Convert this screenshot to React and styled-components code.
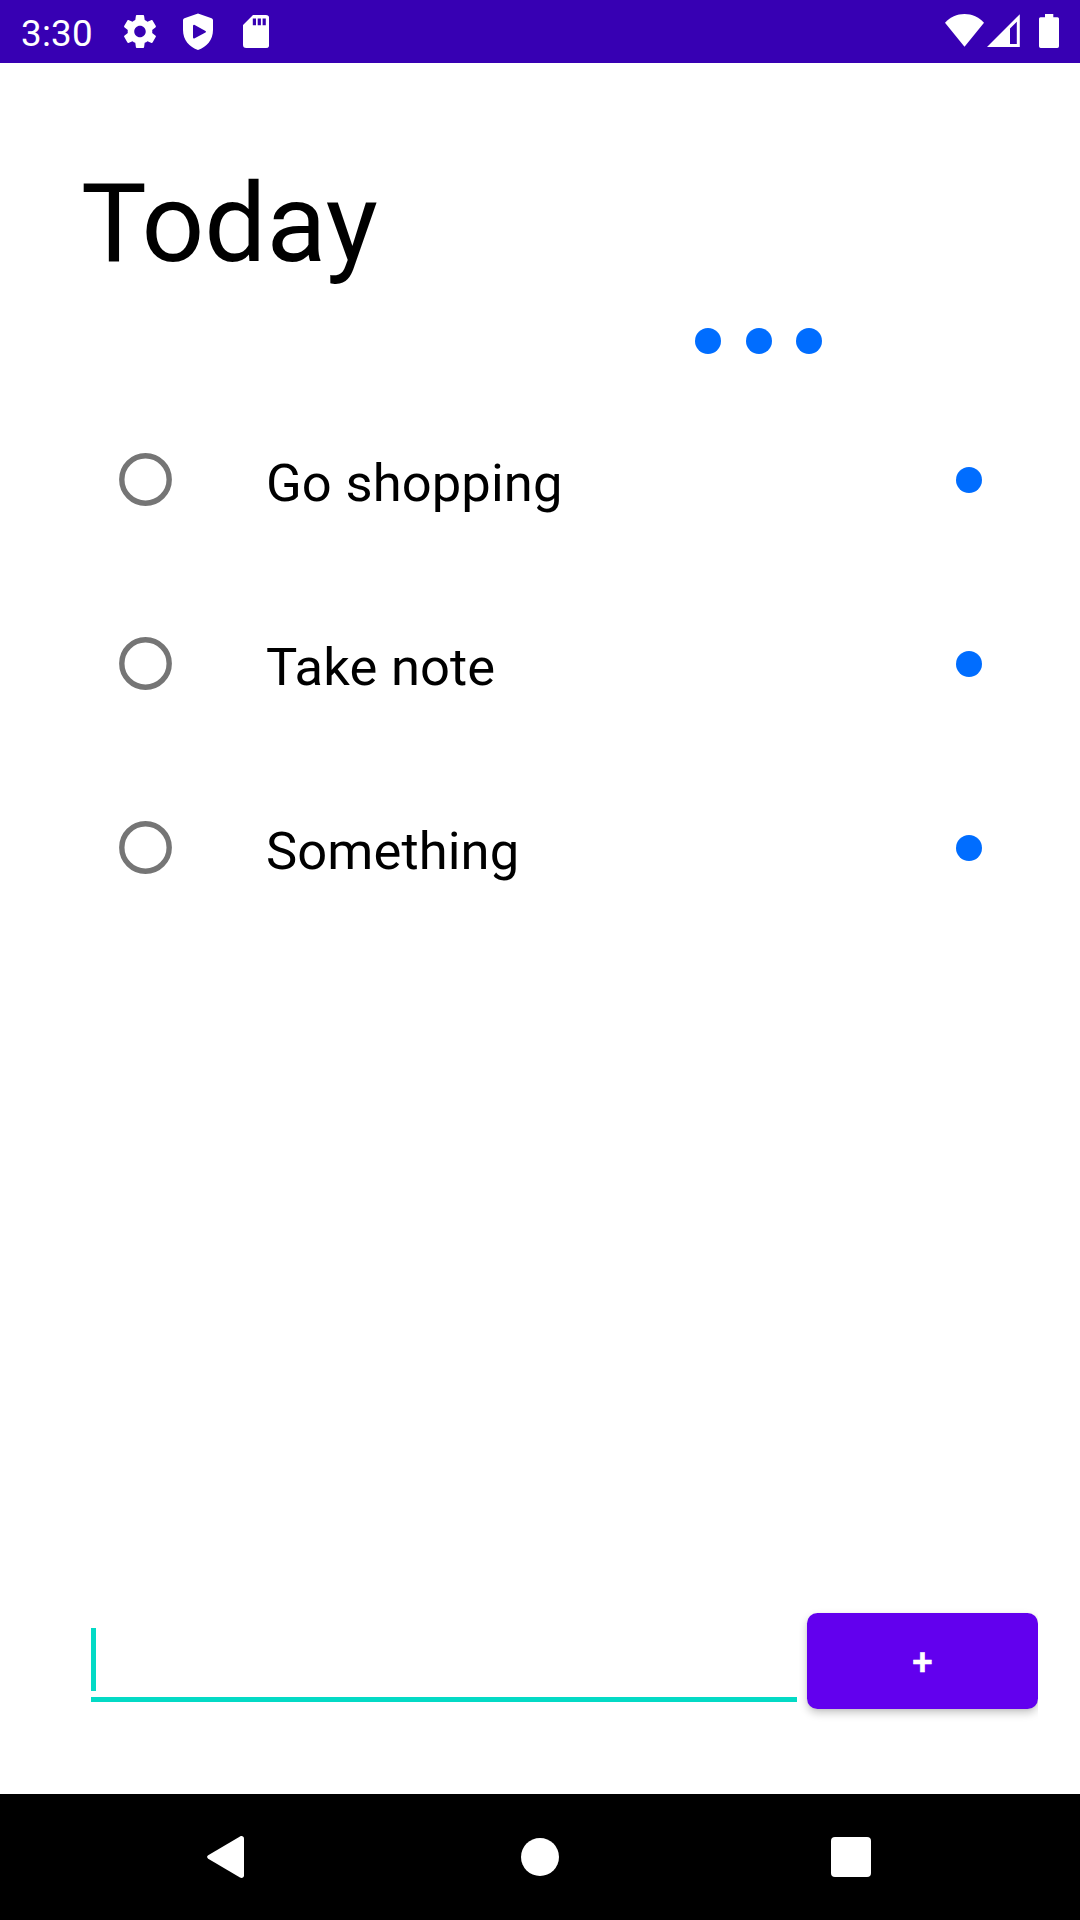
import React from "react";
import styled, { createGlobalStyle } from "styled-components";

const GlobalStyle = createGlobalStyle`
  * { box-sizing: border-box; }
  body { margin: 0; background: #fff; }
`;

const Screen = styled.div`
  display: flex;
  flex-direction: column;
  width: 1080px;
  height: 1920px;
  overflow: hidden;
  background: #fff;
  color: #000;
  font-family: Roboto, "Liberation Sans", sans-serif;
`;

const StatusBar = styled.header`
  display: flex;
  justify-content: space-between;
  height: 63px;
  padding: 0 20px 0 21px;
  background: #3700b3;
  color: #fff;
`;

const StatusGroup = styled.div`
  display: flex;
  align-items: flex-start;
`;

const Clock = styled.time`
  width: 99px;
  padding-top: 12px;
  font-size: 36.75px;
  line-height: 43px;
  letter-spacing: 0.25px;
`;

const StatusIcon = styled.svg`
  display: block;
  flex: none;
  width: ${(p) => p.$w}px;
  height: 63px;
  margin-left: ${(p) => p.$gap || 0}px;
  fill: #fff;
`;

const Content = styled.main`
  display: flex;
  flex: 1;
  flex-direction: column;
`;

const Title = styled.h1`
  margin: 0;
  padding: 96px 0 0 81px;
  font-size: 110.25px;
  font-weight: 400;
  line-height: 130px;
`;

const Dot = styled.span`
  flex: none;
  width: 26px;
  height: 26px;
  border-radius: 50%;
  background: #006dff;
`;

const MoreButton = styled.div`
  display: flex;
  gap: 25px;
  height: 26px;
  margin: 39px 0 0 695px;
  & > :last-child { margin-left: -1px; }
`;

const TaskList = styled.ul`
  margin: 34px 0 0;
  padding: 0;
  list-style: none;
`;

const Task = styled.li`
  display: flex;
  align-items: center;
  height: 184px;
  padding: 0 98px 0 119px;
`;

const Radio = styled.svg`
  display: block;
  flex: none;
  width: 53px;
  height: 53px;
  margin-bottom: 1px;
  fill: none;
  stroke: #757575;
  stroke-width: 5.4px;
`;

const TaskLabel = styled.span`
  flex: 1;
  padding: 6px 0 0 94px;
  font-size: 52.5px;
  line-height: 62px;
  letter-spacing: 0.1px;
  word-spacing: 0.5px;
`;

const Composer = styled.form`
  display: flex;
  margin: auto 42px 85px 91px;
`;

const Field = styled.div`
  display: flex;
  width: 706px;
  height: 74px;
  margin: 15px 10px 0 0;
  border-bottom: 5px solid #03dac5;
`;

const Caret = styled.span`
  width: 5px;
  height: 63px;
  background: #03dac5;
`;

const AddButton = styled.button`
  width: 231px;
  height: 96px;
  padding: 2px 0 0 3px;
  border: 0;
  border-radius: 10.5px;
  background: #6200ee;
  color: #fff;
  font: 500 36.75px/43px Roboto, "Liberation Sans", sans-serif;
  letter-spacing: 0.0893em;
  -webkit-text-stroke: 0.5px #fff;
  box-shadow: 0 4px 8px rgba(0, 0, 0, 0.22), 0 1px 3px rgba(0, 0, 0, 0.06);
  clip-path: inset(-10px 0 -20px -8px);
`;

const NavBar = styled.nav`
  display: flex;
  flex: none;
  align-items: center;
  height: 126px;
  padding-left: 207px;
  background: #000;
`;

const BackIcon = styled.svg`
  display: block;
  width: 37px;
  height: 42px;
  fill: #fff;
`;

const HomeIcon = styled.span`
  width: 38px;
  height: 38px;
  margin-left: 277px;
  border-radius: 50%;
  background: #fff;
`;

const RecentsIcon = styled.span`
  width: 40px;
  height: 40px;
  margin-left: 272px;
  border-radius: 4px;
  background: #fff;
`;

const tasks = ["Go shopping", "Take note", "Something"];

export default function App() {
  return (
    <Screen>
      <GlobalStyle />
      <StatusBar>
        <StatusGroup>
          <Clock>3:30</Clock>
          <StatusIcon $w={40} viewBox="0 0 40 63">
            <path
              transform="translate(0.3 11.8) scale(1.640625)"
              d="M19.43 12.98c.04-.32.07-.64.07-.98s-.03-.66-.07-.98l2.11-1.65c.19-.15.24-.42.12-.64l-2-3.46c-.12-.22-.39-.3-.61-.22l-2.49 1c-.52-.4-1.08-.73-1.69-.98l-.38-2.65C14.46 2.18 14.25 2 14 2h-4c-.25 0-.46.18-.49.42l-.38 2.65c-.61.25-1.17.59-1.69.98l-2.49-1c-.23-.09-.49 0-.61.22l-2 3.46c-.13.22-.07.49.12.64l2.11 1.65c-.04.32-.07.65-.07.98s.03.66.07.98l-2.11 1.65c-.19.15-.24.42-.12.64l2 3.46c.12.22.39.3.61.22l2.49-1c.52.4 1.08.73 1.69.98l.38 2.65c.03.24.24.42.49.42h4c.25 0 .46-.18.49-.42l.38-2.65c.61-.25 1.17-.59 1.69-.98l2.49 1c.23.09.49 0 .61-.22l2-3.46c.12-.22.07-.49-.12-.64l-2.11-1.65zM12 15.5c-1.93 0-3.5-1.57-3.5-3.5s1.57-3.5 3.5-3.5 3.5 1.57 3.5 3.5-1.57 3.5-3.5 3.5z"
            />
          </StatusIcon>
          <StatusIcon $w={30} $gap={23} viewBox="0 0 30 63">
            <path
              fillRule="evenodd"
              d="M15 13.5L28.6 18.3Q30 18.8 30 20.3V30C30 40 23.5 47 15 50C6.500 47 0 40 0 30V20.300Q0 18.800 1.400 18.300ZM10 26V37.400Q10.200 38.900 11.700 38.200L22.500 32.600Q23.600 31.700 22.500 30.900L11.700 24.900Q10.200 24.400 10 26Z"
            />
          </StatusIcon>
          <StatusIcon $w={26} $gap={30} viewBox="0 0 26 63">
            <path
              fillRule="evenodd"
              d="M10 15H23Q26.200 15 26.200 18.300V44.700Q26.200 48 23 48H3.300Q0 48 0 44.700V25ZM9.800 18.400V25.200H13V18.400ZM14.700 18.400V25.200H17.900V18.400ZM19.600 18.400V25.200H22.800V18.400Z"
            />
          </StatusIcon>
        </StatusGroup>
        <StatusGroup>
          <StatusIcon $w={39} viewBox="0 0 39 63">
            <path d="M19.500 46.700L0 22.700C5 17 12 14 19.500 14S34 17 39 22.700Z" />
          </StatusIcon>
          <StatusIcon $w={33} $gap={3} viewBox="0 0 33 63">
            <path fillRule="evenodd" d="M0 47L32.800 14.200V47ZM23 28.500V44H29.800V21.800Z" />
          </StatusIcon>
          <StatusIcon $w={21} $gap={19} viewBox="0 0 21 63">
            <path d="M6 14H14.300V17.300H18.500Q20 17.300 20 18.800V46.200Q20 48 18.300 48H1.700Q0 48 0 46.200V18.800Q0 17.300 1.500 17.300H6Z" />
          </StatusIcon>
        </StatusGroup>
      </StatusBar>
      <Content>
        <Title>Today</Title>
        <MoreButton>
          <Dot />
          <Dot />
          <Dot />
        </MoreButton>
        <TaskList>
          {tasks.map((name) => (
            <Task key={name}>
              <Radio viewBox="0 0 53 53">
                <circle cx="26.5" cy="26.5" r="23.7" />
              </Radio>
              <TaskLabel>{name}</TaskLabel>
              <Dot />
            </Task>
          ))}
        </TaskList>
        <Composer>
          <Field>
            <Caret />
          </Field>
          <AddButton type="button">+</AddButton>
        </Composer>
      </Content>
      <NavBar>
        <BackIcon viewBox="0 0 37 42">
          <path d="M1.200 19.300L33 0.400C35 -0.500 37 0.500 37 2.500V39.500C37 41.500 35 42.500 33 41.600L1.200 22.700Q-1 21 1.200 19.300Z" />
        </BackIcon>
        <HomeIcon />
        <RecentsIcon />
      </NavBar>
    </Screen>
  );
}
